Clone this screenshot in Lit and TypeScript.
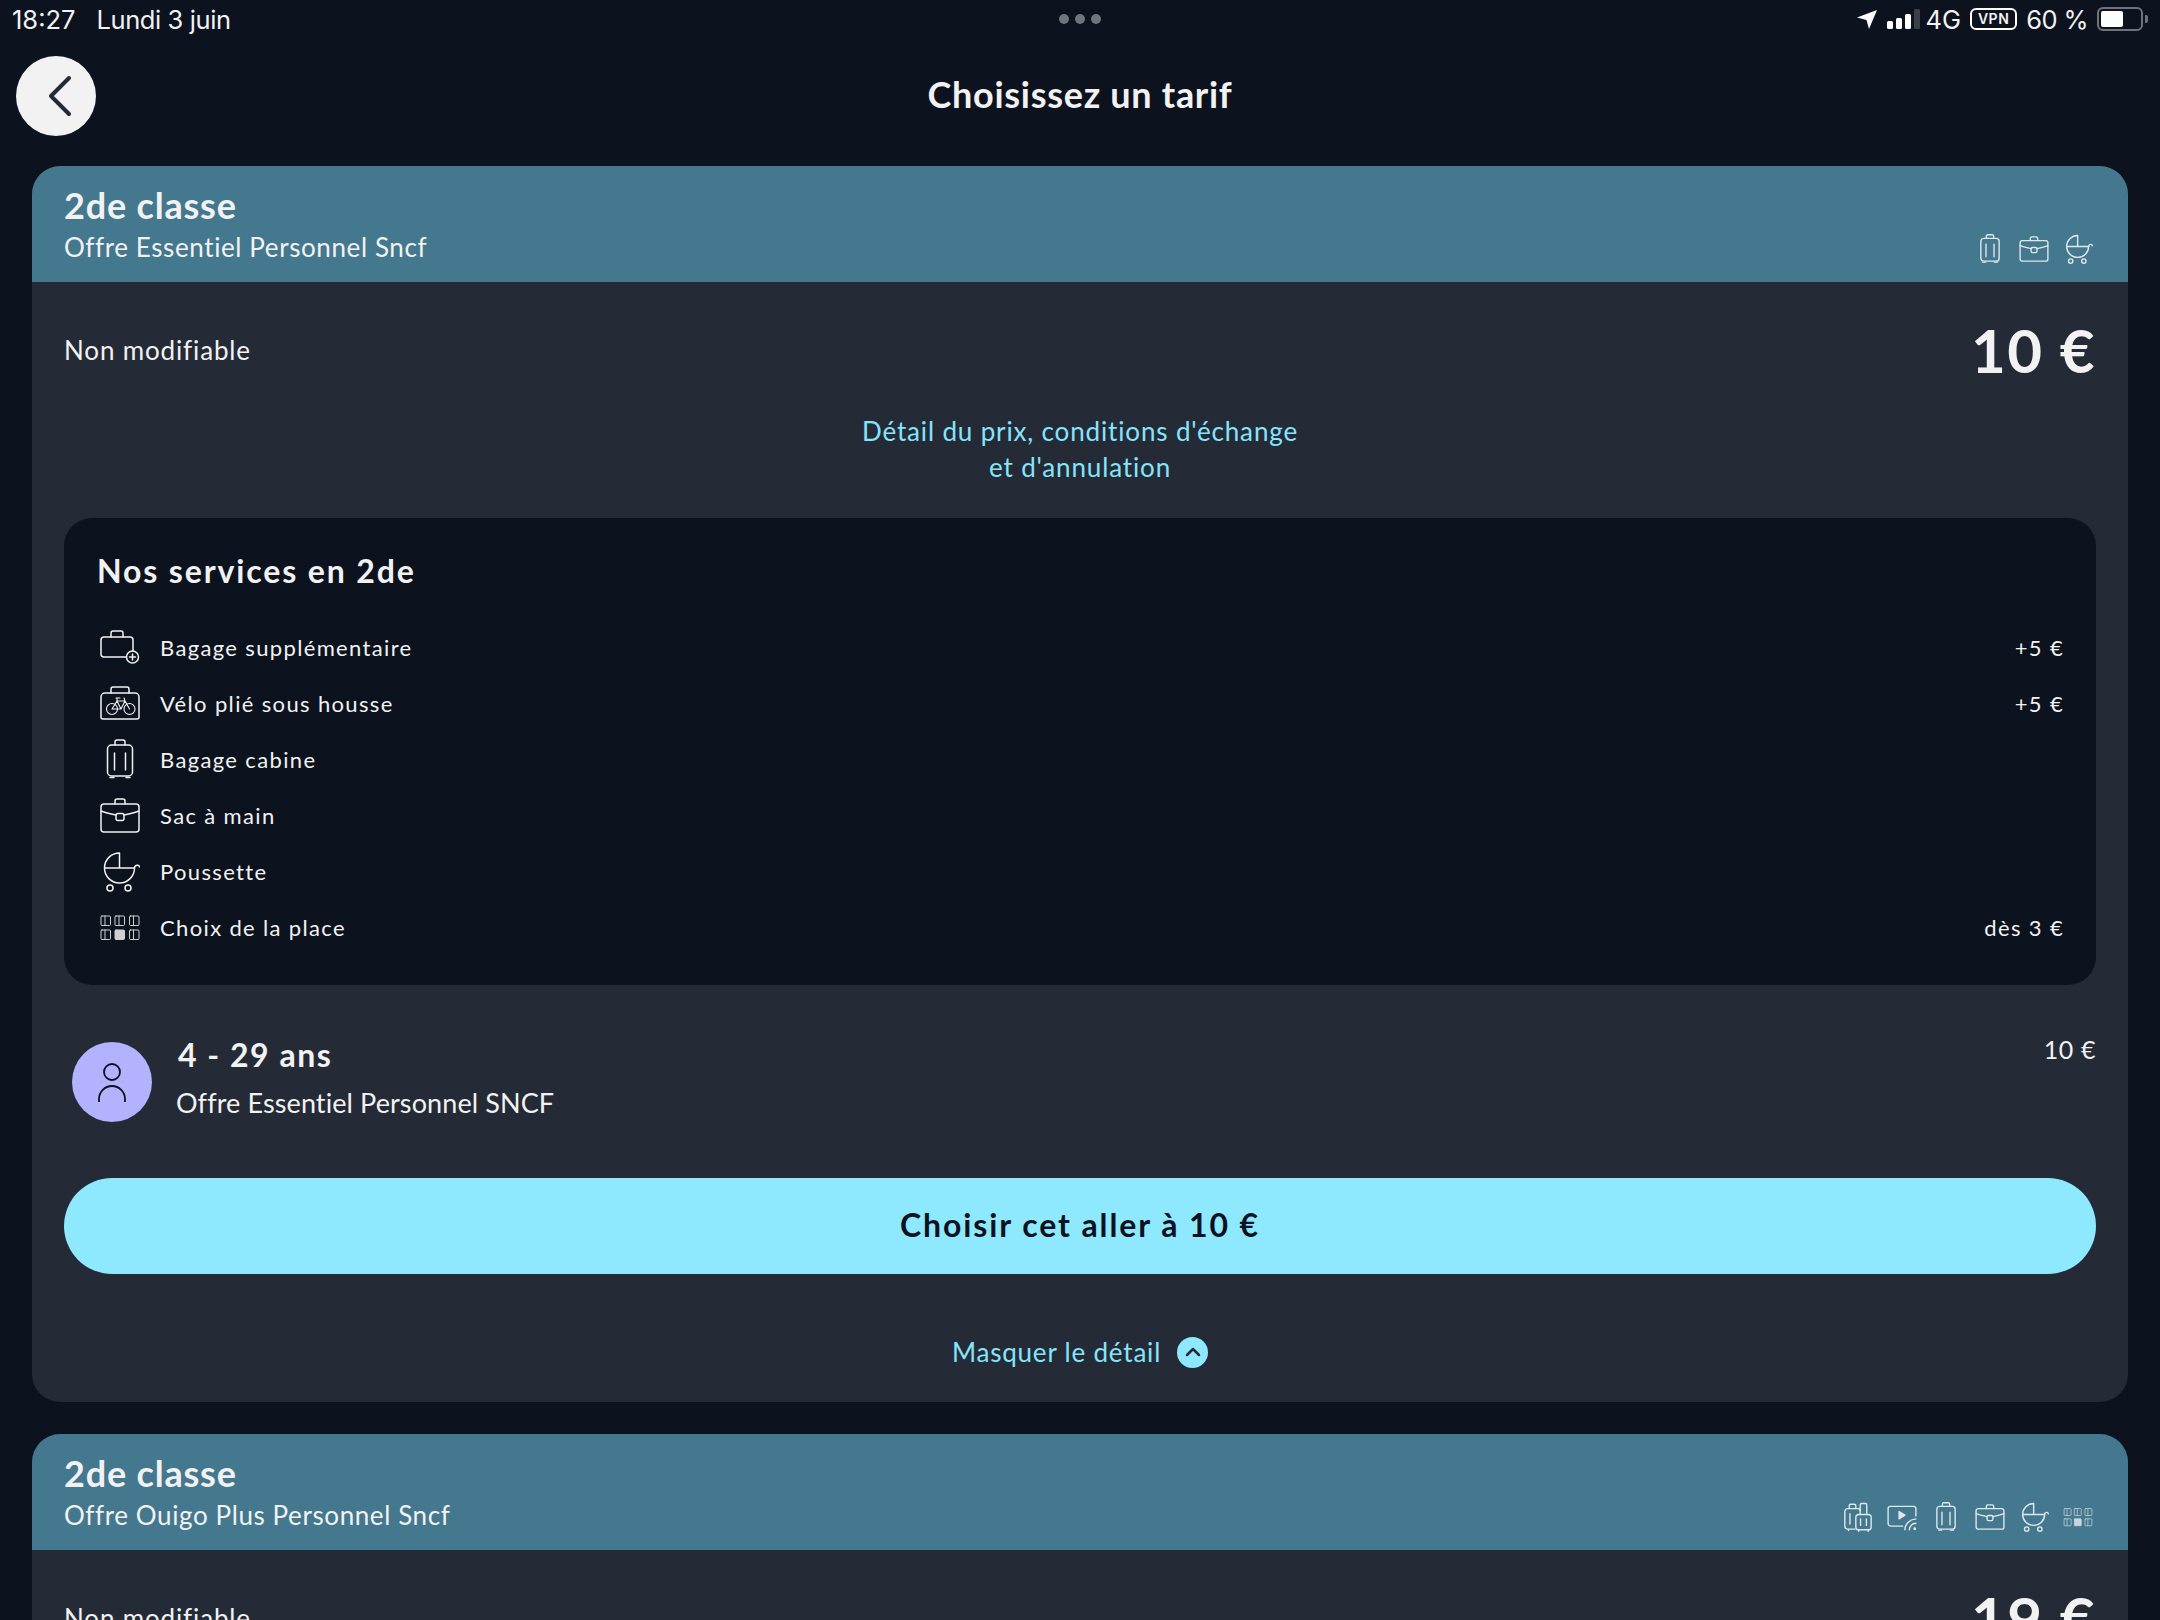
import { LitElement, html, css, svg } from "lit";
import { customElement } from "lit/decorators.js";

const icons: Record<string, any> = {
  bagPlus: svg`<path d="M26 30H4a3 3 0 0 1-3-3V13a3 3 0 0 1 3-3h26a3 3 0 0 1 3 3v11"/><path d="M11 10V6a2 2 0 0 1 2-2h8a2 2 0 0 1 2 2v4"/><circle cx="32.5" cy="30" r="6"/><path d="M32.5 27v6M29.500 30h6"/>`,
  bike: svg`<path d="M5 10h30a4 4 0 0 1 4 4v20a2 2 0 0 1-2 2H3a2 2 0 0 1-2-2V14a4 4 0 0 1 4-4z"/><path d="M11 10V6a2 2 0 0 1 2-2h14a2 2 0 0 1 2 2v4"/><g stroke-width="1.100"><circle cx="12" cy="26" r="5.500"/><circle cx="29.500" cy="26" r="5.500"/><path d="M12 26l5-8h8l4.500 8M17 18l4 8h-9M21 26l4-8M24 15l1 3M16 15h4M17 15v3"/></g>`,
  suitcase: svg`<rect x="7.500" y="6" width="25" height="31" rx="4"/><path d="M15 6V3a2 2 0 0 1 2-2h6a2 2 0 0 1 2 2v3M14.500 14v17M25.500 14v17M10 38.500h4M26 38.500h4"/>`,
  briefcase: svg`<rect x="1" y="9" width="38" height="28" rx="3"/><path d="M15 9V6a2 2 0 0 1 2-2h6a2 2 0 0 1 2 2v3M1 16c5 2 10 3 15 4M39 16c-5 2-10 3-15 4"/><rect x="16" y="18.500" width="8" height="7" rx="2"/>`,
  stroller: svg`<path d="M4.500 17h15V2A15 15 0 0 0 4.500 17a15 15 0 0 0 30 0H19.500"/><path d="M34.500 17c0-3 4.500-4 5-1"/><circle cx="10" cy="37" r="3"/><circle cx="28" cy="37" r="3"/>`,
  seats: svg`<g stroke-width="1" opacity=".85"><rect x="1" y="9" width="9.500" height="9.500" rx="1"/><path d="M5 9v9.500"/><rect x="15" y="9" width="9.500" height="9.500" rx="1"/><path d="M19 9v9.500"/><rect x="29.500" y="9" width="9.500" height="9.500" rx="1"/><path d="M33.500 9v9.500"/><rect x="1" y="23" width="9.500" height="9.500" rx="1"/><path d="M5 23v9.500"/><rect x="15" y="23" width="9.500" height="9.500" rx="1" fill="currentColor"/><rect x="29.500" y="23" width="9.500" height="9.500" rx="1"/><path d="M33.500 23v9.500"/></g>`,
  double: svg`<path d="M16 37H6a4 4 0 0 1-4-4V13a4 4 0 0 1 4-4h14a3 3 0 0 1 3 3M8 9V5a2 2 0 0 1 2-2h5a2 2 0 0 1 2 2v4M9 16v14M7 37v2"/><rect x="17" y="17" width="21" height="21" rx="4"/><path d="M23 17V4a2 2 0 0 1 2-2h5a2 2 0 0 1 2 2v13M23.500 23v9M31.500 23v9M21 38v2M34 38v2"/>`,
  screen: svg`<path d="M21 33H5a4 4 0 0 1-4-4V9a3 3 0 0 1 3-3h32a3 3 0 0 1 3 3v10"/><path d="M16 13l8 5-8 5z" fill="currentColor"/><path d="M24 38c0-8 6-14 15-15M30 38c0-5 4-9 9-9"/><circle cx="37.500" cy="36.500" r="1" fill="currentColor"/>`,
};

const icon = (name: string, size: number) => html`<svg class="ic" width=${size} height=${size} viewBox="0 0 40 41">${icons[name]}</svg>`;

@customElement("offer-card")
class OfferCard extends LitElement {
  static properties = { offer: {}, icons: { attribute: false } };
  offer = "";
  icons: string[] = [];
  static styles = css`
    :host { display: block; }
    .head { height: 116px; box-sizing: border-box; background: #44788f; border-radius: 28px 28px 0 0; padding: 17px 35px 0 32px; display: flex; justify-content: space-between; color: #f2f2f2; }
    .cls { font-size: 36px; font-weight: 700; line-height: 44px; letter-spacing: 0.8px; }
    .off { font-size: 26px; line-height: 38px; letter-spacing: 0.6px; margin-top: 1px; }
    .icons { display: flex; gap: 14px; align-items: flex-end; padding-bottom: 18px; }
    .ic { fill: none; stroke: #dfe8ec; color: #dfe8ec; stroke-width: 1.900; stroke-linecap: round; stroke-linejoin: round; }
    .body { background: #242b36; border-radius: 0 0 28px 28px; padding: 0 32px; }
  `;
  render() {
    return html`<div class="head">
        <div><div class="cls">2de classe</div><div class="off">${this.offer}</div></div>
        <div class="icons">${this.icons.map((n) => icon(n, 30))}</div>
      </div>
      <div class="body"><slot></slot></div>`;
  }
}

const services = [
  ["bagPlus", "Bagage supplémentaire", "+5 €"],
  ["bike", "Vélo plié sous housse", "+5 €"],
  ["suitcase", "Bagage cabine", ""],
  ["briefcase", "Sac à main", ""],
  ["stroller", "Poussette", ""],
  ["seats", "Choix de la place", "dès 3 €"],
];

@customElement("app-root")
class AppRoot extends LitElement {
  static styles = css`
    :host { display: block; width: 2160px; height: 1620px; overflow: hidden; background: #0c121e; color: #f2f2f2; font-family: Lato, "Open Sans", sans-serif; }
    .status { height: 38px; padding: 0 12px; display: flex; align-items: center; justify-content: space-between; position: relative; font-family: Inter, "Liberation Sans", sans-serif; font-size: 25.500px; }
    .status .l { display: flex; gap: 21px; }
    .date { letter-spacing: -.4px; }
    .pct { letter-spacing: -.6px; }
    .status .r { display: flex; align-items: center; gap: 9px; }
    .dots { position: absolute; left: 1059px; top: 14px; display: flex; gap: 6px; }
    .dots i { width: 10px; height: 10px; border-radius: 50%; background: #6f737b; }
    .bars { display: flex; align-items: flex-end; gap: 3px; height: 20px; margin: 0 -4px 0 1px; }
    .bars i { width: 6px; background: #fff; border-radius: 1.500px; }
    .vpn { border: 2px solid #fff; border-radius: 6px; font-size: 14px; font-weight: 600; padding: 1px 6px; letter-spacing: .5px; line-height: 16px; }
    .batt { width: 46px; height: 24px; box-sizing: border-box; border: 2px solid #6f737b; border-radius: 6px; padding: 2px; }
    .batt i { display: block; width: 58%; height: 100%; background: #fff; border-radius: 2px; }
    .nub { width: 3px; height: 8px; background: #6f737b; border-radius: 0 2px 2px 0; margin-left: -7px; }
    .top { height: 128px; position: relative; display: flex; align-items: center; justify-content: center; padding-bottom: 16px; box-sizing: border-box; font-size: 36px; font-weight: 700; letter-spacing: .7px; }
    .back { position: absolute; left: 16px; top: 18px; width: 80px; height: 80px; border-radius: 50%; background: #f2f2f2; display: flex; align-items: center; justify-content: center; }
    .back svg { margin-left: 8px; }
    .cards { padding: 0 32px; display: flex; flex-direction: column; gap: 32px; }
    .price-row { display: flex; justify-content: space-between; align-items: center; height: 136px; font-size: 26px; letter-spacing: .85px; }
    .price { font-size: 60px; font-weight: 700; letter-spacing: 1.500px; }
    .link { color: #86e4fb; font-size: 26px; line-height: 36px; text-align: center; letter-spacing: .85px; margin-top: -5px; }
    .panel { background: #0c121e; border-radius: 28px; margin-top: 33px; padding: 32px 32px 0 33px; height: 467px; box-sizing: border-box; }
    .panel h2 { margin: 0 0 27px; font-size: 32px; line-height: 42px; font-weight: 700; letter-spacing: 1.860px; }
    .svc { height: 56px; display: flex; align-items: center; font-size: 22px; letter-spacing: 1.350px; }
    .svc svg { fill: none; stroke: #f2f2f2; color: #f2f2f2; stroke-width: 1.500; stroke-linecap: round; stroke-linejoin: round; margin: 0 20px 0 3px; flex: none; }
    .svc .n { flex: 1; }
    .pass { display: flex; padding: 57px 8px 0; height: 193px; box-sizing: border-box; position: relative; }
    .avatar { width: 80px; height: 80px; border-radius: 50%; background: #b3b2ff; flex: none; display: flex; align-items: center; justify-content: center; }
    .who { margin-left: 24px; }
    .age { font-size: 32px; font-weight: 700; letter-spacing: 1.500px; line-height: 40px; margin: -7px 0 0 2px; }
    .who .d { font-size: 27px; line-height: 40px; margin-top: 8px; letter-spacing: .1px; }
    .amt { position: absolute; right: 0; top: 49px; font-size: 25px; letter-spacing: .6px; }
    .btn { height: 96px; box-sizing: border-box; padding-bottom: 3px; border-radius: 48px; background: #8ee9ff; color: #0c121e; display: flex; align-items: center; justify-content: center; font-size: 32px; font-weight: 700; letter-spacing: 1.900px; }
    .hide { height: 128px; display: flex; align-items: center; justify-content: center; gap: 16px; color: #86e4fb; font-size: 26px; letter-spacing: .8px; padding-top: 28px; box-sizing: border-box; }
    .chev { width: 31px; height: 31px; border-radius: 50%; background: #8ee9ff; display: flex; align-items: center; justify-content: center; }
  `;
  render() {
    return html`
      <div class="status">
        <div class="l"><span>18:27</span><span class="date">Lundi 3 juin</span></div>
        <div class="dots"><i></i><i></i><i></i></div>
        <div class="r">
          <svg width="20" height="20" viewBox="0 0 20 20"><path d="M20 1L12 20l-2.500-9L0 8.500z" fill="#fff"/></svg>
          <div class="bars"><i style="height:8px"></i><i style="height:11px"></i><i style="height:15px"></i><i style="height:20px;background:#3a3f49"></i></div>
          <span>4G</span><span class="vpn">VPN</span><span class="pct">60 %</span>
          <div class="batt"><i></i></div><div class="nub"></div>
        </div>
      </div>
      <div class="top">
        <div class="back"><svg width="26" height="42" viewBox="0 0 26 42" fill="none" stroke="#242b36" stroke-width="4" stroke-linecap="round" stroke-linejoin="round"><path d="M22 3L4 21l18 18"/></svg></div>
        Choisissez un tarif
      </div>
      <div class="cards">
        <offer-card offer="Offre Essentiel Personnel Sncf" .icons=${["suitcase", "briefcase", "stroller"]}>
          <div class="price-row"><span>Non modifiable</span><span class="price">10 €</span></div>
          <div class="link">Détail du prix, conditions d'échange<br />et d'annulation</div>
          <div class="panel">
            <h2>Nos services en 2de</h2>
            ${services.map(([i, n, p]) => html`<div class="svc"><svg width="40" height="41" viewBox="0 0 40 41">${icons[i]}</svg><span class="n">${n}</span><span>${p}</span></div>`)}
          </div>
          <div class="pass">
            <div class="avatar"><svg width="30" height="42" viewBox="0 0 30 42" fill="none" stroke="#0c121e" stroke-width="1.800"><circle cx="15" cy="11" r="8"/><path d="M2 41v-3a13 13 0 0 1 26 0v3"/></svg></div>
            <div class="who"><div class="age">4 - 29 ans</div><div class="d">Offre Essentiel Personnel SNCF</div></div>
            <div class="amt">10 €</div>
          </div>
          <div class="btn">Choisir cet aller à 10 €</div>
          <div class="hide"><span>Masquer le détail</span><span class="chev"><svg width="16" height="10" viewBox="0 0 16 10" fill="none" stroke="#242b36" stroke-width="2.500" stroke-linecap="round" stroke-linejoin="round"><path d="M2 8l6-6 6 6"/></svg></span></div>
        </offer-card>
        <offer-card offer="Offre Ouigo Plus Personnel Sncf" .icons=${["double", "screen", "suitcase", "briefcase", "stroller", "seats"]}>
          <div class="price-row"><span>Non modifiable</span><span class="price">19 €</span></div>
        </offer-card>
      </div>
    `;
  }
}
